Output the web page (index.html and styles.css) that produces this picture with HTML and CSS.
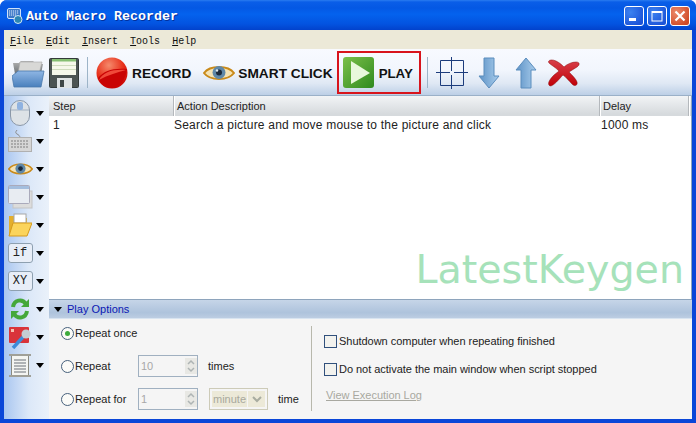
FILE: index.html
```html
<!DOCTYPE html>
<html lang="en">
<head>
<meta charset="utf-8">
<title>Auto Macro Recorder</title>
<link rel="stylesheet" href="styles.css">
</head>
<body>
<div class="window">
  <header class="titlebar">
    <svg class="app-icon" width="16" height="16" viewBox="0 0 16 16"><rect x="0.5" y="0.5" width="13" height="10" rx="1.5" fill="#3c78c8" stroke="#cfe2fa"/><path d="M2 3h10M2 5h10M2 7h8" stroke="#e6f0fc" stroke-dasharray="1.2 .8"/><circle cx="11" cy="11.5" r="4" fill="#2d86b4" stroke="#cfe8f4"/></svg>
    <span class="title-text">Auto Macro Recorder</span>
    <div class="caption-buttons">
      <span class="cap cap-blue"><svg width="18" height="18" viewBox="0 0 18 18"><rect x="4" y="11" width="7" height="3" fill="#fff"/></svg></span>
      <span class="cap cap-blue"><svg width="18" height="18" viewBox="0 0 18 18"><rect x="4" y="4.5" width="10" height="9.5" fill="none" stroke="#fff"/><rect x="4" y="4" width="10" height="2" fill="#fff"/></svg></span>
      <span class="cap cap-red"><svg width="18" height="18" viewBox="0 0 18 18"><path d="M4.5 4.5l9 9M13.500 4.500l-9 9" stroke="#fff" stroke-width="2.200"/></svg></span>
    </div>
  </header>

  <nav class="menubar">
    <span><u>F</u>ile</span><span><u>E</u>dit</span><span><u>I</u>nsert</span><span><u>T</u>ools</span><span><u>H</u>elp</span>
  </nav>

  <div class="toolbar">
    <svg class="tb-open" width="33" height="30" viewBox="0 0 33 30"><defs><linearGradient id="fo1" x1="0" y1="0" x2="0" y2="1"><stop offset="0" stop-color="#8fb6e4"/><stop offset="1" stop-color="#4a80bc"/></linearGradient><linearGradient id="fo2" x1="0" y1="0" x2="0" y2="1"><stop offset="0" stop-color="#b4b4b4"/><stop offset="1" stop-color="#6a7074"/></linearGradient></defs><path d="M1 5h6l2 -2h12l3 3 7 0 -2 10H3z" fill="url(#fo2)"/><path d="M8 4h22l-3 12H6z" fill="#d8d8d6" stroke="#aaa" stroke-width=".6"/><path d="M6 13h26l-3 16H2L0 18z" fill="url(#fo1)" stroke="#4a78ac" stroke-width=".8"/></svg>
    <svg class="tb-save" width="30" height="30" viewBox="0 0 30 30"><rect x=".5" y=".5" width="29" height="29" rx="1" fill="#4c5452" stroke="#333a39"/><rect x="3" y="1" width="24" height="16" fill="#f6f8ea"/><rect x="3" y="1" width="24" height="2.500" fill="#86bf72"/><path d="M3 7.500h24M3 11.500h24" stroke="#cfdcbc"/><rect x="8" y="20" width="15" height="10" fill="#dfe3e3"/><rect x="11" y="22" width="4" height="7" fill="#3e4645"/></svg>
    <span class="tb-sep tb-sep-a"></span>
    <svg class="tb-record" width="32" height="32" viewBox="0 0 32 32"><defs><radialGradient id="rb" cx=".4" cy=".25" r=".8"><stop offset="0" stop-color="#f58a6c"/><stop offset=".55" stop-color="#e8341e"/><stop offset="1" stop-color="#c80000"/></radialGradient></defs><circle cx="16" cy="16" r="15.500" fill="url(#rb)"/><path d="M2 21c6-7 14-10 29-9-1 11-8 19-15 19C9 31 4 27 2 21z" fill="#c90404"/><path d="M3 23c4-8 14-11 27-10-8 2-18 5-27 10z" fill="#f04a3a"/></svg>
    <span class="tb-label tb-label-record">RECORD</span>
    <svg class="tb-eye" width="32" height="20" viewBox="0 0 32 20"><path d="M1 10C7 2 25 2 31 10 25 18 7 18 1 10z" fill="#f5e3b4" stroke="#c98a1a" stroke-width="2"/><circle cx="16" cy="9.500" r="6.500" fill="#5f88a8"/><circle cx="16" cy="9.500" r="3" fill="#1c2a3c"/><circle cx="14" cy="7.500" r="1.200" fill="#dfeaf2"/></svg>
    <span class="tb-label tb-label-smart">SMART CLICK</span>
    <div class="play-box">
      <svg class="tb-play" width="32" height="32" viewBox="0 0 32 32"><defs><linearGradient id="pg" x1="0" y1="0" x2="1" y2="1"><stop offset="0" stop-color="#7cc04a"/><stop offset="1" stop-color="#2f8a1e"/></linearGradient></defs><rect width="31" height="31" rx="3" fill="url(#pg)"/><path d="M8 4l19 12L8 27z" fill="#e9f8dc"/></svg>
      <span class="tb-label tb-label-play">PLAY</span>
    </div>
    <span class="tb-sep tb-sep-b"></span>
    <svg class="tb-cross" width="32" height="32" viewBox="0 0 32 32" fill="none" stroke="#1c3c7c"><path d="M4.500 3.500h23v25h-23zM0 15.500h14M18 15.500h14M15.500 0v14M15.500 18v14"/></svg>
    <svg class="tb-down" width="22" height="32" viewBox="0 0 22 32"><defs><linearGradient id="ad" x1="0" x2="1"><stop offset="0" stop-color="#5d92c6"/><stop offset="1" stop-color="#a9cdec"/></linearGradient></defs><path d="M6 1h10v18h5L11 31 1 19h5z" fill="url(#ad)" stroke="#5b8dbd"/></svg>
    <svg class="tb-up" width="22" height="32" viewBox="0 0 22 32"><path d="M6 31h10V13h5L11 1 1 13h5z" fill="url(#ad)" stroke="#5b8dbd"/></svg>
    <svg class="tb-delete" width="33" height="28" viewBox="0 0 33 28"><defs><linearGradient id="xg" x1="0" y1="0" x2="0" y2="1"><stop offset="0" stop-color="#d8404a"/><stop offset="1" stop-color="#c00008"/></linearGradient></defs><path d="M3 27C0 25 2 21 7 16l5-4C8 8 4 6 2 4c-2-3 3-4 7-2 4 2 6 4 8 6 3-3 8-5 12-5 4 0 4 3 1 5l-8 5c3 3 7 7 8 10 1 3-2 5-5 2-3-3-6-7-9-9-4 4-9 11-13 11z" fill="url(#xg)" stroke="#8c0a0a" stroke-width=".5"/></svg>
  </div>

  <div class="content">
    <aside class="sidebar">
      <div class="side-item"><svg width="20" height="26" viewBox="0 0 20 26"><rect x=".5" y=".5" width="19" height="25" rx="9.500" fill="#dde2e6" stroke="#8b98a8"/><path d="M1 10h18" stroke="#a2b0c0"/><rect x="7" y="2" width="6" height="8" rx="2" fill="#8fb2e0"/></svg><i class="caret"></i></div>
      <div class="side-item"><svg width="25" height="24" viewBox="0 0 25 24"><path d="M12 9C12 4 5 6 9 1" fill="none" stroke="#8b8b8b"/><rect x=".5" y="8.500" width="23" height="14" fill="#d6d6d6" stroke="#b0b0b0"/><path d="M3 12h18M3 15h18M3 18h18" stroke="#9c9c9c" stroke-width="1.500" stroke-dasharray="2 1"/></svg><i class="caret"></i></div>
      <div class="side-item"><svg width="25" height="16" viewBox="0 0 32 20"><path d="M1 10C7 2 25 2 31 10 25 18 7 18 1 10z" fill="#f5e3b4" stroke="#c98a1a" stroke-width="2"/><circle cx="16" cy="9.500" r="6.500" fill="#5f88a8"/><circle cx="16" cy="9.500" r="3" fill="#1c2a3c"/></svg><i class="caret"></i></div>
      <div class="side-item"><svg width="25" height="24" viewBox="0 0 25 24"><rect x="5" y="6" width="19" height="17" fill="#dcdcdc" stroke="#c4c4c4"/><rect x=".5" y=".5" width="21" height="18" rx="1" fill="#e8ecf2" stroke="#aab"/><rect x="1" y="1" width="20" height="3" fill="#a4bede"/></svg><i class="caret"></i></div>
      <div class="side-item"><svg width="24" height="24" viewBox="0 0 24 24"><path d="M1 23L1 3h7l2 2h9v4z" fill="#e4ae2c"/><rect x="6" y="1" width="12" height="9" fill="#fff" stroke="#a8a8a8"/><path d="M1 23l4-13h19l-5 13z" fill="#fbd45c" stroke="#d59a1c"/></svg><i class="caret"></i></div>
      <div class="side-item"><span class="code-btn">if</span><i class="caret"></i></div>
      <div class="side-item"><span class="code-btn">XY</span><i class="caret"></i></div>
      <div class="side-item"><svg width="20" height="24" viewBox="0 0 20 24" fill="none" stroke="#45a83a" stroke-width="4"><path d="M3 10C4 3 12 1 16 7"/><path d="M17 14C16 21 8 23 4 17"/><path d="M19 2v8h-8z" fill="#45a83a" stroke="none"/><path d="M1 22v-8h8z" fill="#45a83a" stroke="none"/></svg><i class="caret"></i></div>
      <div class="side-item"><svg width="23" height="24" viewBox="0 0 23 24"><rect y="2" width="20" height="16" rx="1" fill="#d9333a"/><rect x="2" y="4" width="3" height="3" fill="#f4c0b0"/><path d="M4 23L14 12" stroke="#3f8cd8" stroke-width="3.500"/><circle cx="17" cy="9" r="4.500" fill="#c4ccd4"/></svg><i class="caret"></i></div>
      <div class="side-item"><svg width="22" height="23" viewBox="0 0 22 23"><rect x="2.500" y="1.500" width="17" height="20" fill="#f4f5f2" stroke="#8a8a80"/><rect y="0" width="22" height="2" fill="#a0a098"/><rect y="21" width="22" height="2" fill="#a0a098"/><path d="M5 6h12M5 9h12M5 12h12M5 15h12M5 18h12" stroke="#6a7078"/></svg><i class="caret"></i></div>
    </aside>

    <main class="main">
      <section class="list">
        <div class="list-row list-head">
          <span class="col-step">Step</span><span class="col-action">Action Description</span><span class="col-delay">Delay</span>
        </div>
        <div class="list-row list-data">
          <span class="col-step">1</span><span class="col-action">Search a picture and move mouse to the picture and click</span><span class="col-delay">1000 ms</span>
        </div>
        <div class="watermark">LatestKeygen</div>
      </section>

      <div class="panel-head"><i class="caret"></i><span>Play Options</span></div>

      <section class="panel">
        <div class="repeat-col">
          <div class="opt-row">
            <span class="radio radio-on"></span><span class="opt-label">Repeat once</span>
          </div>
          <div class="opt-row">
            <span class="radio"></span><span class="opt-label">Repeat</span>
            <div class="spin"><span>10</span><b><svg width="12" height="16" viewBox="0 0 12 16"><path d="M3 6l3-3 3 3M3 10l3 3 3-3" fill="none" stroke="#aeb4b4" stroke-width="1.500"/></svg></b></div>
            <span class="unit">times</span>
          </div>
          <div class="opt-row">
            <span class="radio"></span><span class="opt-label">Repeat for</span>
            <div class="spin"><span>1</span><b><svg width="12" height="16" viewBox="0 0 12 16"><path d="M3 6l3-3 3 3M3 10l3 3 3-3" fill="none" stroke="#aeb4b4" stroke-width="1.500"/></svg></b></div>
            <div class="select"><span>minute</span><b><svg width="12" height="10" viewBox="0 0 12 10"><path d="M2 3l4 4 4-4" fill="none" stroke="#a8aca0" stroke-width="2"/></svg></b></div>
            <span class="unit">time</span>
          </div>
        </div>
        <div class="divider"></div>
        <div class="check-col">
          <div class="check-row"><span class="check"></span><span>Shutdown computer when repeating finished</span></div>
          <div class="check-row"><span class="check"></span><span>Do not activate the main window when script stopped</span></div>
          <a class="log-link">View Execution Log</a>
        </div>
      </section>
    </main>
  </div>
</div>
</body>
</html>
```

FILE: styles.css
```css
* { box-sizing: border-box; }
html, body { margin: 0; padding: 0; }
body { width: 696px; height: 423px; overflow: hidden; background: #fff; }

.window {
  width: 696px; height: 423px;
  display: flex; flex-direction: column;
  background: #0a46d8;
  border-radius: 7px 7px 0 0;
  overflow: hidden;
  padding: 0 4px 4px;
  font-family: "Liberation Sans", Arial, sans-serif;
  font-size: 12px;
  color: #222;
}

.titlebar {
  flex: 0 0 30px;
  margin: 0 -4px;
  padding: 2px 6px 0 7px;
  display: flex; align-items: center;
  background: linear-gradient(#2a7cf0 0, #0a5ee8 2px, #0458e4 8px, #0462ee 14px, #0353e0 24px, #0242cc 30px);
}
.title-text {
  margin-left: 3px;
  font-family: "Liberation Mono", monospace;
  font-weight: bold; font-size: 13.33px;
  color: #fff; text-shadow: 1px 1px 0 #02309c;
}
.caption-buttons { margin-left: auto; margin-top: 0; display: flex; gap: 3px; }
.cap {
  width: 20px; height: 20px;
  border: 1px solid #fff; border-radius: 3px;
  display: flex; align-items: center; justify-content: center;
}
.cap-blue { background: radial-gradient(circle at 30% 30%, #3c82f0, #1c54d8 80%); }
.cap-red { background: radial-gradient(circle at 30% 30%, #ec8a6c, #d04a26 80%); }

.menubar {
  flex: 0 0 19px;
  display: flex; align-items: center;
  padding: 3px 0 0 6px;
  background: #ece9d8;
  font-family: "Liberation Mono", monospace;
  font-size: 10px; color: #111;
}
.menubar span { margin-right: 12px; }

.toolbar {
  flex: 0 0 47px;
  display: flex; align-items: center;
  padding-top: 2px;
  background: linear-gradient(#f8faff 0, #f2f6fd 45%, #dfe8f4 75%, #bccfe6 100%);
  border-bottom: 1px solid #9ab0c8;
}
.tb-open { margin-left: 8px; }
.tb-save { margin-left: 4px; margin-top: -1px; }
.tb-sep { width: 1px; height: 31px; background: #9db4c8; margin-top: -1px; }
.tb-sep-a { margin-left: 8px; }
.tb-record { margin-left: 8px; margin-top: -1px; }
.tb-label { font-weight: bold; font-size: 13.7px; color: #111; margin-top: 1px; }
.tb-label-record { margin-left: 4px; }
.tb-eye { margin-left: 12px; margin-top: -1px; }
.tb-label-smart { margin-left: 3px; }
.play-box {
  width: 84px; height: 43px;
  margin-left: 4px; margin-top: -1px;
  border: 2px solid #d8141c;
  display: flex; align-items: center;
  padding-left: 4px;
}
.tb-label-play { margin-left: 4px; font-size: 13.3px; }
.tb-sep-b { margin-left: 6px; }
.tb-cross { margin-left: 8px; margin-top: -1px; }
.tb-down { margin-left: 10px; margin-top: -1px; }
.tb-up { margin-left: 15px; margin-top: -1px; }
.tb-delete { margin-left: 10px; margin-top: -1px; }

.content { flex: 1; display: flex; min-height: 0; }

.sidebar {
  flex: 0 0 45px;
  padding-top: 3px;
  display: flex; flex-direction: column;
  background: linear-gradient(90deg, #a9c6f0 0, #dce8f8 55%, #eaf1fa 100%);
}
.side-item {
  flex: 0 0 28px;
  display: flex; align-items: center; justify-content: center;
  position: relative;
  padding-right: 13px;
}
.side-item .caret { position: absolute; left: 32px; top: 12px; }
.caret {
  display: block; width: 0; height: 0;
  border-left: 4.500px solid transparent;
  border-right: 4.500px solid transparent;
  border-top: 5px solid #000;
}
.code-btn {
  width: 25px; height: 20px;
  border: 1px solid #8ea0b0; border-radius: 3px;
  background: #e8eef8;
  display: flex; align-items: center; justify-content: center;
  font-family: "Liberation Mono", monospace;
  font-size: 12px; color: #222;
}

.main { flex: 1; display: flex; flex-direction: column; min-width: 0; background: #f5f5f5; }

.list {
  flex: 0 0 204px;
  position: relative;
  background: #fff;
  border: 1px solid #8ea4bc;
  border-left: 0;
  border-top: 0;
}
.list-row { display: flex; }
.list-head {
  height: 21px; align-items: center;
  background: linear-gradient(#f2f4f6, #d6dadd 90%);
  border-bottom: 1px solid #fff;
}
.list-head span { height: 100%; display: flex; align-items: center; border-right: 1px solid #fff; box-shadow: inset -1px 0 0 #b4b8bc; font-size: 11px; }
.list-data { height: 16px; align-items: center; font-size: 12px; letter-spacing: .21px; }
.col-step { width: 126px; padding-left: 4px; }
.col-action { width: 426px; }
.list-head .col-action { padding-left: 2px; }
.col-delay { width: 89px; padding-left: 2px; }
.list-data .col-action { margin-left: -1px; margin-right: 1px; }
.list-data .col-delay { padding-left: 0; }
.watermark {
  position: absolute; right: 7px; top: 149px;
  font-family: "DejaVu Sans", sans-serif;
  font-size: 39.6px; line-height: 48px;
  color: #a6e2ba;
}

.panel-head {
  flex: 0 0 19px;
  display: flex; align-items: center; gap: 5px;
  padding-left: 5px;
  background: linear-gradient(#c6d5e8, #aec3dc 70%, #bccde2);
  border-bottom: 1px solid #d8e4f0;
  font-size: 11px; color: #0b18b4;
}

.panel { flex: 1; display: flex; padding-top: 3px; font-size: 11px; }
.repeat-col { flex: 0 0 262px; padding-left: 12px; display: flex; flex-direction: column; gap: 11px; }
.opt-row { height: 22px; display: flex; align-items: center; }
.radio {
  width: 13px; height: 13px; border-radius: 50%;
  border: 1px solid #46607c; background: #fbfbf8;
  position: relative; margin-right: 1px;
}
.radio-on::after {
  content: ""; position: absolute; left: 3px; top: 3px;
  width: 5px; height: 5px; border-radius: 50%; background: #3caa3c;
}
.opt-label { width: 63px; }
.spin {
  width: 60px; height: 22px;
  border: 1px solid #a0b0c0; background: #f5f5f5;
  display: flex; align-items: center; justify-content: space-between;
  padding-left: 2px; color: #a8a8a8;
}
.spin b { display: flex; background: #e8e8e4; }
.unit { margin-left: 10px; }
.select {
  width: 59px; height: 22px; margin-left: 11px;
  border: 1px solid #cdcbb8;
  display: flex; align-items: center; justify-content: space-between;
  padding: 2px; color: #a8a89c;
  font-size: 11px;
}
.select span { background: #ece9d8; height: 100%; flex: 1; display: flex; align-items: center; padding-left: 1px; }
.select b { width: 17px; display: flex; align-items: center; justify-content: center; background: #ece9d8; margin-left: 1px; height: 100%; }
.divider { flex: 0 0 1px; height: 85px; margin-top: 4px; background: #b8b8ac; }
.check-col { padding: 5px 0 0 12px; letter-spacing: -.03px; }
.check-row { height: 28px; display: flex; align-items: center; gap: 2px; }
.check { width: 13px; height: 13px; border: 1px solid #30507c; background: #f2f2ee; }
.log-link { display: block; margin: 6px 0 0 2px; color: #a8a8a0; text-decoration: underline; font-size: 11px; }
```
